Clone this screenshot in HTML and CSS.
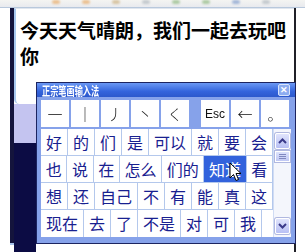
FILE: index.html
```html
<!DOCTYPE html>
<html lang="zh-CN">
<head>
    <meta charset="UTF-8">
    <title>正宗笔画输入法</title>
    <link rel="stylesheet" href="styles.css">
</head>
<body>
    <div class="screen">
        <div class="strip">
            <span class="dot orange"></span>
            <span class="dot orange"></span>
            <span class="dot tan"></span>
            <span class="dot grey"></span>
            <span class="dot green"></span>
            <span class="dot green"></span>
            <span class="dot blue"></span>
            <span class="dot grey"></span>
        </div>
        <div class="desk">
            <div class="edge"></div>
            <div class="doc">
                <div class="editor">今天天气晴朗，我们一起去玩吧你</div>
                <div class="under">
                    <div class="patch"></div>
                    <div class="rest"></div>
                </div>
            </div>
        </div>

        <div class="ime">
            <div class="ime-title">
                <span class="caption">正宗笔画输入法</span>
                <span class="close">✕</span>
            </div>
            <div class="keys">
                <button class="key">一</button>
                <button class="key">｜</button>
                <button class="key">丿</button>
                <button class="key">丶</button>
                <button class="key">く</button>
                <button class="key esc">Esc</button>
                <button class="key">←</button>
                <button class="key">。</button>
            </div>
            <div class="pad">
                <div class="grid">
                    <div class="row">
                        <span class="cell">好</span><span class="cell">的</span><span class="cell">们</span><span class="cell">是</span><span class="cell">可以</span><span class="cell">就</span><span class="cell">要</span><span class="cell">会</span>
                    </div>
                    <div class="row">
                        <span class="cell">也</span><span class="cell">说</span><span class="cell">在</span><span class="cell">怎么</span><span class="cell">们的</span><span class="cell picked">知道</span><span class="cell">看</span>
                    </div>
                    <div class="row">
                        <span class="cell">想</span><span class="cell">还</span><span class="cell">自己</span><span class="cell">不</span><span class="cell">有</span><span class="cell">能</span><span class="cell">真</span><span class="cell">这</span>
                    </div>
                    <div class="row last">
                        <span class="cell">现在</span><span class="cell">去</span><span class="cell">了</span><span class="cell">不是</span><span class="cell">对</span><span class="cell">可</span><span class="cell">我</span><span class="cell empty"></span>
                    </div>
                </div>
                <div class="scroll">
                    <div class="arrow">
                        <svg width="9" height="6" viewBox="0 0 9 6"><polyline points="1,5 4.5,1.5 8,5" fill="none" stroke="#3a3a8a" stroke-width="2"/></svg>
                    </div>
                    <div class="thumb"><i></i><i></i><i></i></div>
                    <div class="track"></div>
                    <div class="arrow">
                        <svg width="9" height="6" viewBox="0 0 9 6"><polyline points="1,1 4.5,4.5 8,1" fill="none" stroke="#3a3a8a" stroke-width="2"/></svg>
                    </div>
                </div>
            </div>
        </div>

        <svg class="pointer" width="14" height="20" viewBox="0 0 14 20">
            <path d="M1 1 L1 16 L4.5 12.5 L7 18.5 L9.5 17.5 L7 11.5 L12 11.5 Z" fill="#fff" stroke="#000" stroke-width="1"/>
        </svg>
    </div>
</body>
</html>
```

FILE: styles.css
```css
body {
    margin: 0;
    background-color: #fff;
    font-family: "Noto Sans CJK SC", "Liberation Sans", sans-serif;
}
.screen {
    position: relative;
    width: 305px;
    height: 252px;
    overflow: hidden;
}
.strip {
    height: 7px;
    display: flex;
    gap: 22px;
    padding-left: 52px;
    background: linear-gradient(#f4f4f2, #e8eaee);
    border-bottom: 1px solid #b8c8dc;
}
.dot {
    width: 8px;
    height: 4px;
    border-radius: 4px;
    filter: blur(1px);
    opacity: 0.6;
}
.orange { background-color: #e8a050; }
.tan { background-color: #c8a870; }
.grey { background-color: #a8b0b8; }
.green { background-color: #80b070; }
.blue { background-color: #7090c8; }
.desk {
    display: flex;
    height: 244px;
    padding-left: 10px;
}
.edge {
    width: 4px;
    background: linear-gradient(#14143c 235px, #a8c4ec 235px, #a8c4ec 237px, #fff 237px);
}
.doc {
    flex: 1;
    display: flex;
    flex-direction: column;
    border-right: 2px solid #202028;
    margin-right: 9px;
}
.editor {
    height: 96px;
    box-sizing: border-box;
    padding: 8px 4px 0 4px;
    background-color: #fff;
    border-left: 2px solid #a8c8ee;
    border-top: 1px solid #e0e6ee;
    border-bottom-left-radius: 5px;
    font-size: 19px;
    font-weight: bold;
    line-height: 26px;
    color: #000;
}
.under {
    flex: 1;
    display: flex;
}
.patch {
    width: 22px;
    background: linear-gradient(#c4c4f0 39px, #0c0c44 39px, #0c0c44 196px, #a8c4ec 196px, #a8c4ec 198px, #fff 198px);
}
.rest {
    flex: 1;
}
.ime {
    position: absolute;
    left: 36px;
    top: 82px;
    width: 253px;
    border: 1px solid #1c2460;
    padding: 0 4px 6px 1px;
    background-color: #86a2ea;
}
.ime-title {
    height: 14px;
    margin-right: -4px;
    margin-left: -1px;
    padding: 0 5px 0 5px;
    display: flex;
    align-items: center;
    justify-content: space-between;
    background: linear-gradient(#6a98f4, #3464dc 60%, #2c58cc);
    color: #fff;
    font-weight: bold;
}
.caption {
    display: inline-block;
    font-size: 12px;
    line-height: 13px;
    white-space: nowrap;
    transform: scaleX(0.68);
    transform-origin: left center;
}
.close {
    width: 10px;
    height: 10px;
    font-size: 9px;
    line-height: 10px;
    text-align: center;
    background-color: #8cacf0;
    border: 1px solid #d8e4fc;
    border-radius: 2px;
}
.keys {
    display: flex;
    gap: 2px;
    padding: 3px 0 2px 3px;
}
.key {
    width: 28px;
    height: 27px;
    padding: 0;
    border: none;
    background-color: #fff;
    font-family: "Noto Sans CJK SC", sans-serif;
    font-size: 15px;
    font-weight: 300;
    color: #101010;
    will-change: transform;
}
.key.esc {
    margin-left: 10px;
    font-family: "Liberation Sans", sans-serif;
    font-size: 12px;
    font-weight: normal;
}
.pad {
    display: flex;
    margin-left: 3px;
    background-color: #fff;
}
.grid {
    width: 232px;
}
.row {
    display: flex;
    height: 27px;
    box-sizing: border-box;
    border-bottom: 1px solid #b4c8ec;
}
.row.last {
    border-bottom: none;
}
.cell {
    flex: 1 1 auto;
    padding: 0 4px;
    border-right: 1px solid #b4c8ec;
    font-size: 16px;
    line-height: 26px;
    text-align: center;
    white-space: nowrap;
    color: #182090;
}
.row.last .cell {
    flex: 0 0 auto;
    padding: 0 5px;
}
.row.last .cell.empty {
    flex: 1;
    border-right: none;
}
.cell.picked {
    background-color: #3262dc;
    color: #fff;
}
.scroll {
    width: 17px;
    display: flex;
    flex-direction: column;
    align-items: center;
    padding: 4px 0 3px;
    background-color: #f4f6fc;
    border-left: 1px solid #d0dcf4;
}
.arrow {
    width: 13px;
    height: 14px;
    display: flex;
    align-items: center;
    justify-content: center;
    background: linear-gradient(#e0e4fc, #b8c0f4);
    border: 1px solid #fff;
    border-radius: 2px;
    box-shadow: 0 0 0 1px #b0b8e0;
}
.thumb {
    width: 13px;
    height: 9px;
    margin-top: 2px;
    display: flex;
    flex-direction: column;
    align-items: center;
    justify-content: center;
    gap: 1px;
    background: linear-gradient(#dce2fc, #c0c8f4);
    border: 1px solid #fff;
    box-shadow: 0 0 0 1px #b0b8e0;
}
.thumb i {
    width: 7px;
    height: 1px;
    background-color: #8088c0;
}
.track {
    flex: 1;
}
.pointer {
    position: absolute;
    left: 229px;
    top: 162px;
}
```
